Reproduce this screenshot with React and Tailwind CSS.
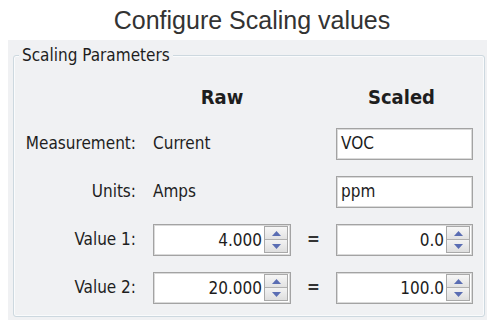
import React from "react";

const body = { fontFamily: '"DejaVu Sans Condensed", "Liberation Sans", sans-serif' };

function Spinner() {
  return (
    <div className="flex flex-col w-[24px] h-[27px] border border-[#a9a9a9] bg-[#e9e9e9] shrink-0">
      <div className="flex-1 flex items-center justify-center bg-gradient-to-b from-[#f7f7f7] to-[#e2e2e2] border-b border-[#b0b0b0]">
        <svg width="9" height="5" viewBox="0 0 9 5">
          <path d="M0 5 L4.5 0 L9 5 Z" fill="#5a6db3" />
        </svg>
      </div>
      <div className="flex-1 flex items-center justify-center bg-gradient-to-b from-[#f3f3f3] to-[#dedede]">
        <svg width="9" height="5" viewBox="0 0 9 5">
          <path d="M0 0 L9 0 L4.5 5 Z" fill="#5a6db3" />
        </svg>
      </div>
    </div>
  );
}

function TextBox({ value }) {
  return (
    <div className="h-8 bg-white border border-[#a3a3a3] shadow-[inset_0_0_0_1px_#dadada] flex items-center pl-[4px] text-[17px] text-[#1c1c1c]">
      {value}
    </div>
  );
}

function SpinBox({ value }) {
  return (
    <div className="h-8 bg-white border border-[#a3a3a3] shadow-[inset_0_0_0_1px_#dadada] flex items-start justify-end pt-[1px] pr-[2px] text-[17px] text-[#1c1c1c]">
      <span className="self-center mr-[2px]">{value}</span>
      <Spinner />
    </div>
  );
}

const rows = [
  { label: "Measurement:", raw: "Current", scaled: "VOC", kind: "text" },
  { label: "Units:", raw: "Amps", scaled: "ppm", kind: "text" },
  { label: "Value 1:", raw: "4.000", scaled: "0.0", kind: "spin" },
  { label: "Value 2:", raw: "20.000", scaled: "100.0", kind: "spin" },
];

export default function App() {
  return (
    <div className="w-[487px] h-[324px] bg-white overflow-hidden">
      <div
        className="h-10 pl-[17px] pt-[1px] text-center text-[25px] leading-[38px] text-[#333]"
        style={{ fontFamily: '"Liberation Sans", Arial, sans-serif' }}
      >
        Configure Scaling values
      </div>
      <div className="ml-2 h-[280px] bg-[#f0f1f3] pt-[15px] pl-[5px] pr-[2px]" style={body}>
        <div className="relative h-[262px] border border-[#cdd8df] rounded-[3px] shadow-[inset_0_0_0_1px_#fafbfc]">
          <span className="absolute left-[5px] top-[-11px] px-[3px] bg-[#f0f1f3] text-[17px] leading-[20px] text-[#1e1e1e]">
            Scaling Parameters
          </span>
          <div className="grid grid-cols-[122px_17px_138px_45px_137px] pt-[29px]">
            <div />
            <div />
            <div className="text-center font-bold text-[20px] leading-6 text-[#1e1e1e]">Raw</div>
            <div />
            <div className="text-center pr-[6px] font-bold text-[20px] leading-6 text-[#1e1e1e]">Scaled</div>
          </div>
          <div className="grid grid-cols-[122px_17px_138px_45px_137px] gap-y-4 mt-[19px]">
            {rows.map((r) => (
              <React.Fragment key={r.label}>
                <div className="h-8 flex items-center justify-end text-[17px] text-[#1e1e1e]">{r.label}</div>
                <div />
                {r.kind === "text" ? (
                  <div className="h-8 flex items-center text-[17px] text-[#1e1e1e]">{r.raw}</div>
                ) : (
                  <SpinBox value={r.raw} />
                )}
                <div className="h-8 flex items-center justify-center text-[17px] font-bold text-[#333]">
                  {r.kind === "spin" ? "=" : ""}
                </div>
                {r.kind === "text" ? <TextBox value={r.scaled} /> : <SpinBox value={r.scaled} />}
              </React.Fragment>
            ))}
          </div>
        </div>
      </div>
    </div>
  );
}
